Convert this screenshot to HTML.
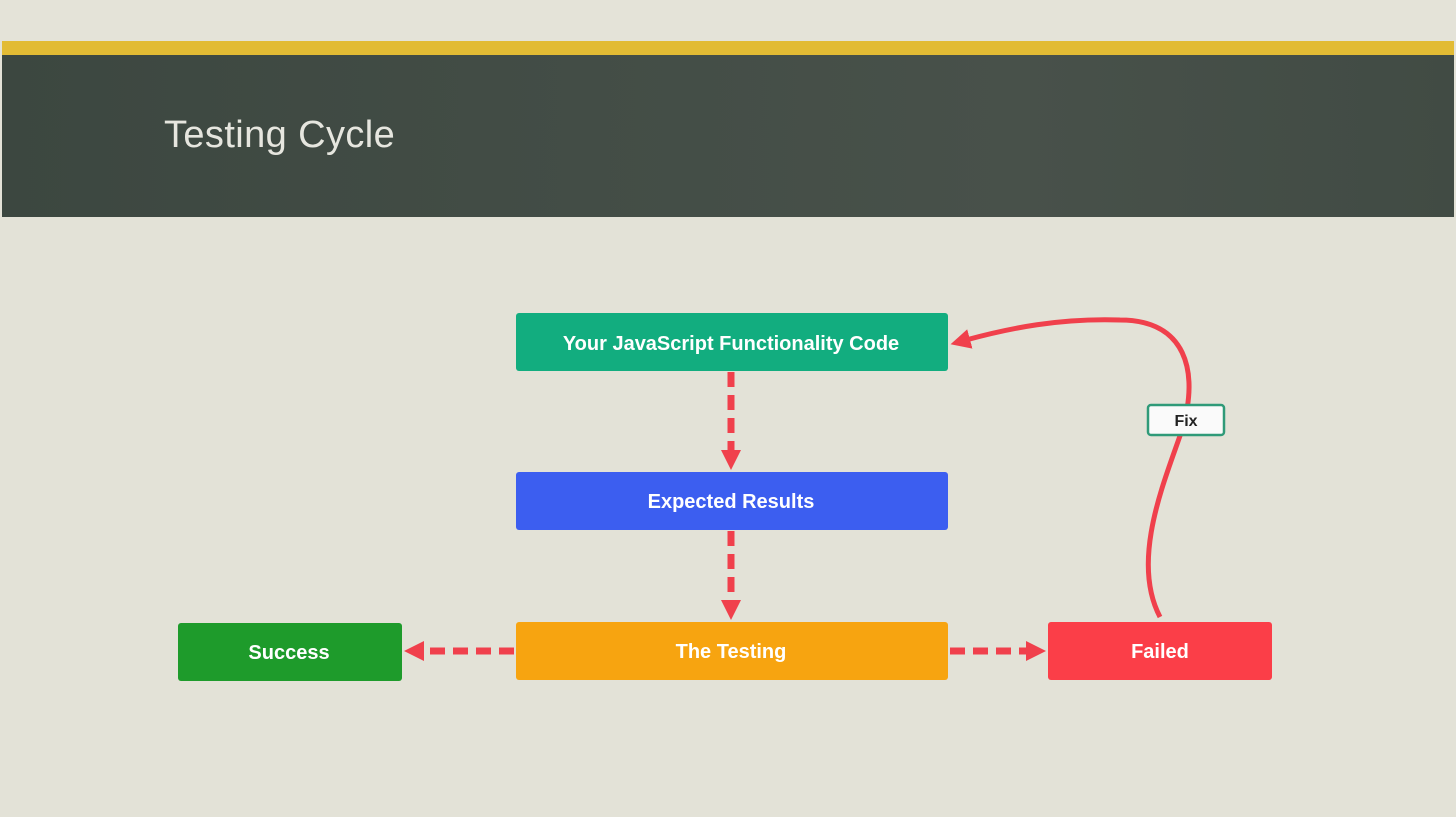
<!DOCTYPE html>
<html><head><meta charset="utf-8"><style>
html,body{margin:0;padding:0;width:1456px;height:817px;overflow:hidden;background:#e3e2d7;}
.top{position:absolute;left:0;top:0;width:1456px;height:41px;background:#e4e3d8;}
.yel{position:absolute;left:2px;top:41px;width:1452px;height:14px;background:#e2bb34;}
.board{position:absolute;left:2px;top:55px;width:1452px;height:162px;background:linear-gradient(90deg,#3c4740,#434d46 40%,#48514a 70%,#414b44);}
.title{position:absolute;left:164px;top:114px;font:38px "Liberation Sans",sans-serif;color:#e6e6df;letter-spacing:0.4px;}
svg{position:absolute;left:0;top:0;}
</style></head><body>
<div class="top"></div><div class="yel"></div><div class="board"></div>
<div class="title">Testing Cycle</div>
<svg width="1456" height="817">
<defs>
<marker id="ah" markerWidth="20" markerHeight="20" refX="4" refY="10" orient="auto" markerUnits="userSpaceOnUse"><path d="M0,0 L20,10 L0,20 z" fill="#f0404c"/></marker>
</defs>
<g font-family="Liberation Sans, sans-serif" font-weight="bold" font-size="20" fill="#fff" text-anchor="middle">
<rect x="516" y="313" width="432" height="58" rx="3" fill="#12ad7f"/>
<text x="731" y="350">Your JavaScript Functionality Code</text>
<rect x="516" y="472" width="432" height="58" rx="3" fill="#3c5ef0"/>
<text x="731" y="508">Expected Results</text>
<rect x="516" y="622" width="432" height="58" rx="3" fill="#f7a410"/>
<text x="731" y="658">The Testing</text>
<rect x="178" y="623" width="224" height="58" rx="3" fill="#1e9b2b"/>
<text x="289" y="659">Success</text>
<rect x="1048" y="622" width="224" height="58" rx="3" fill="#fb3e48"/>
<text x="1160" y="658">Failed</text>
</g>
<g stroke="#f0404c" stroke-width="7" fill="none">
<line x1="731" y1="372" x2="731" y2="454" stroke-dasharray="15,8" marker-end="url(#ah)"/>
<line x1="731" y1="531" x2="731" y2="604" stroke-dasharray="15,8" marker-end="url(#ah)"/>
<line x1="514" y1="651" x2="420" y2="651" stroke-dasharray="15,8" marker-end="url(#ah)"/>
<line x1="950" y1="651" x2="1030" y2="651" stroke-dasharray="15,8" marker-end="url(#ah)"/>
<path d="M1160,617 C1130,560 1165,480 1182,430 C1200,370 1185,320 1120,320 C1060,318 1010,328 966,340" stroke-width="5" marker-end="url(#ah)"/>
</g>
<rect x="1148" y="405" width="76" height="30" rx="3" fill="#fafafa" stroke="#2f9a78" stroke-width="2.5"/>
<text x="1186" y="426" font-family="Liberation Sans, sans-serif" font-weight="bold" font-size="16" fill="#222" text-anchor="middle">Fix</text>
</svg>
</body></html>
